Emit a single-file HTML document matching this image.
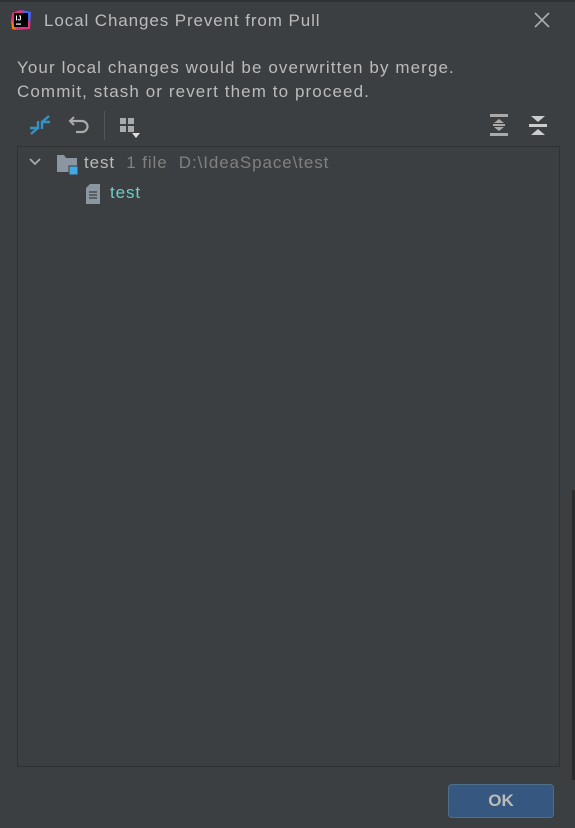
<!DOCTYPE html>
<html><head><style>
body{margin:0;width:575px;height:828px;background:#3c3f41;font-family:"Liberation Sans",sans-serif;position:relative;overflow:hidden;color:#bbbbbb}
.a{position:absolute;white-space:nowrap}
</style></head><body>
<div class="a" style="left:0;top:0;width:575px;height:2px;background:#2f3133"></div>
<svg class="a" style="left:10px;top:9px" width="22" height="22" viewBox="0 0 22 22">
<polygon points="2,4 10,1 21,3 20,20 6,21 1,14" fill="#e4317f"/><polygon points="12,1 21,3 20,14" fill="#3b66f5"/><polygon points="1,10 6,21 2,20" fill="#f97a12"/>
<rect x="4" y="4" width="14" height="14" fill="#000"/><text x="5.5" y="11.5" font-size="7" font-weight="bold" fill="#fff" font-family="Liberation Sans">IJ</text><rect x="6" y="14.5" width="5" height="1.2" fill="#fff"/></svg>
<div class="a" style="left:44px;top:11px;font-size:17px;letter-spacing:0.9px;color:#bbbbbb">Local Changes Prevent from Pull</div>
<svg class="a" style="left:533px;top:11px" width="18" height="18"><path d="M2 2L16 16M16 2L2 16" stroke="#aaa" stroke-width="1.6"/></svg>
<div class="a" style="left:17px;top:56px;font-size:17px;line-height:24px;letter-spacing:1.1px">Your local changes would be overwritten by merge.<br>Commit, stash or revert them to proceed.</div>
<svg class="a" style="left:28px;top:114px" width="24" height="22"><path d="M2 14H10V7M10 14L3 20" stroke="#3592c4" stroke-width="2.4" fill="none"/><path d="M22 8H14V15M14 8L21 2" stroke="#3592c4" stroke-width="2.4" fill="none"/></svg>
<svg class="a" style="left:68px;top:114px" width="24" height="22"><path d="M6 3L2 7L6 11" stroke="#aaa" stroke-width="2" fill="none"/><path d="M2 7H14A5.5 5.5 0 0 1 14 18H8" stroke="#aaa" stroke-width="2.2" fill="none"/></svg>
<div class="a" style="left:104px;top:111px;width:1px;height:29px;background:#555"></div>
<svg class="a" style="left:119px;top:117px" width="26" height="24"><rect x="1" y="1" width="6" height="6" fill="#aaa"/><rect x="9" y="1" width="6" height="6" fill="#aaa"/><rect x="1" y="9" width="6" height="6" fill="#aaa"/><rect x="9" y="9" width="6" height="6" fill="#aaa"/><polygon points="13,16 21,16 17,21" fill="#ddd"/></svg>
<svg class="a" style="left:488px;top:113px" width="22" height="24"><rect x="2" y="1" width="18" height="3" fill="#aaa"/><rect x="2" y="20" width="18" height="3" fill="#aaa"/><polygon points="6,10 11,6 16,10" fill="#aaa"/><polygon points="6,14 11,18 16,14" fill="#aaa"/><rect x="5" y="11" width="12" height="2" fill="#aaa"/></svg>
<svg class="a" style="left:527px;top:114px" width="22" height="22"><polygon points="4,2 18,2 11,8" fill="#ccc"/><rect x="2" y="10" width="18" height="3" fill="#ccc"/><polygon points="4,21 18,21 11,15" fill="#ccc"/></svg>
<div class="a" style="left:17px;top:146px;width:541px;height:619px;border:1px solid #2f3133"></div>
<svg class="a" style="left:28px;top:156px" width="14" height="12"><path d="M2 3L7 8L12 3" stroke="#aaa" stroke-width="1.8" fill="none"/></svg>
<svg class="a" style="left:56px;top:153px" width="24" height="24"><path d="M1 2H8L10 5H21V19H1Z" fill="#8c96a0"/><rect x="13" y="13" width="9" height="9" fill="#3fa9e0" stroke="#3c3f41" stroke-width="1"/></svg>
<div class="a" style="left:84px;top:153px;font-size:17px;letter-spacing:0.9px;color:#bbbbbb">test <span style="color:#808080">&nbsp;1 file &nbsp;D:\IdeaSpace\test</span></div>
<svg class="a" style="left:85px;top:183px" width="18" height="22"><path d="M1 5L5 1H15V21H1Z" fill="#8c96a0"/><path d="M4 9H12M4 12H12M4 15H12" stroke="#3c3f41" stroke-width="1.3"/></svg>
<div class="a" style="left:110px;top:183px;font-size:17px;letter-spacing:0.9px;color:#6acfc6">test</div>
<div class="a" style="left:572px;top:490px;width:3px;height:290px;background:#2b2b2b"></div>
<div class="a" style="left:448px;top:784px;width:106px;height:34px;background:#365880;border:1px solid #4c708c;border-radius:4px;box-sizing:border-box;text-align:center;line-height:32px;font-weight:bold;font-size:17px;color:#bbbbbb">OK</div>
</body></html>
